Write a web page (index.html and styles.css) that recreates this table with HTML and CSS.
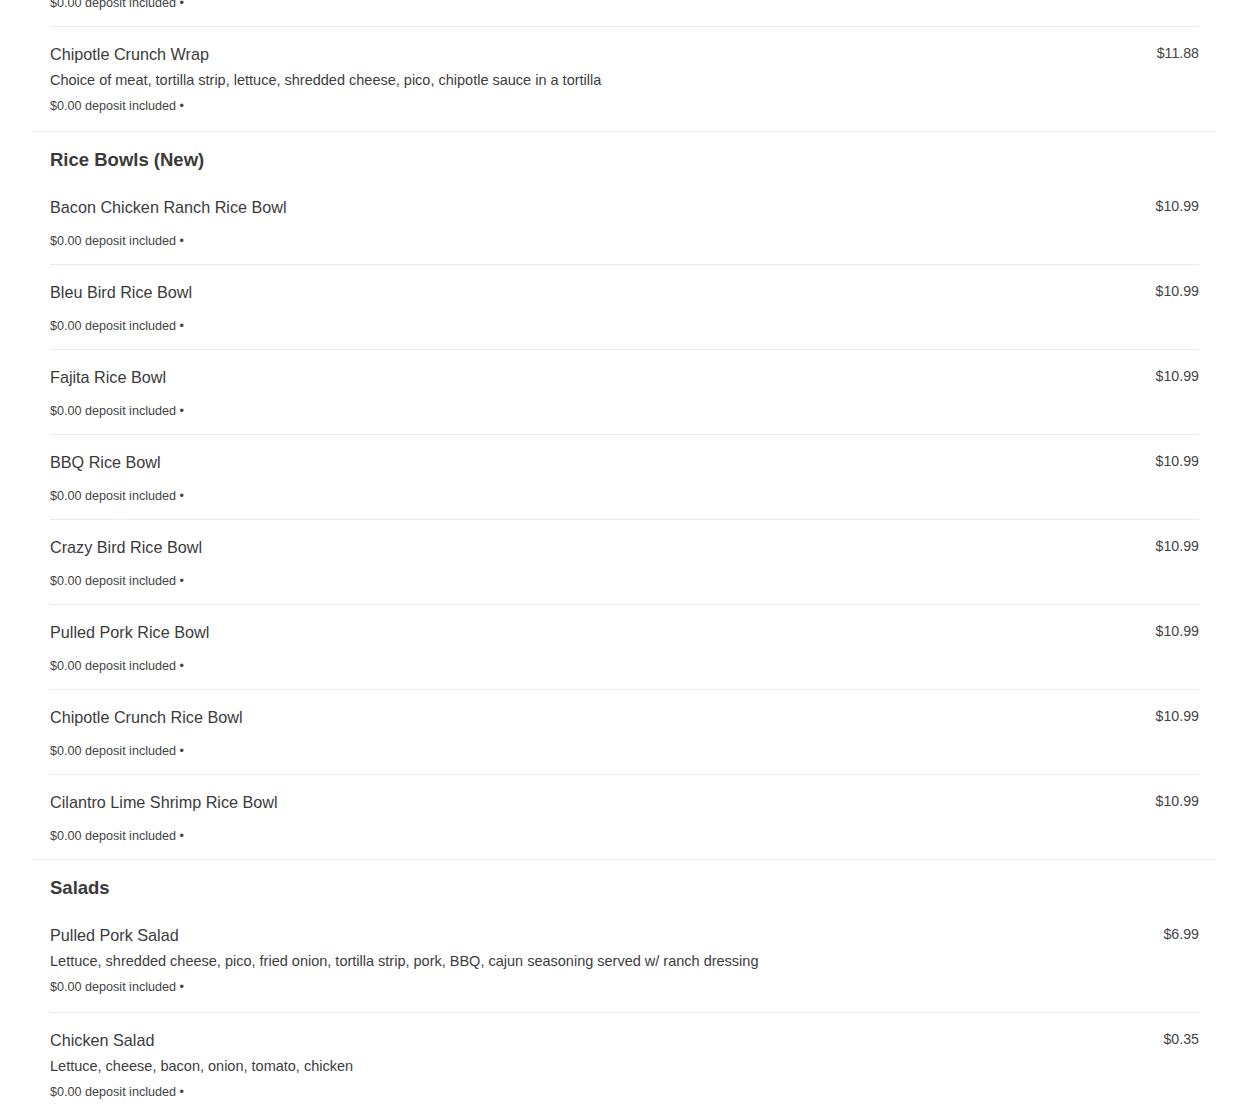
FILE: index.html
```html
<!DOCTYPE html>
<html lang="en">
<head>
<meta charset="utf-8">
<title>Menu</title>
<link rel="stylesheet" href="styles.css">
</head>
<body>
<main class="menu">
  <section class="section section--scrolled">
    <div class="item item--partial">
      <div class="deposit">$0.00 deposit included •</div>
    </div>
    <div class="item">
      <div class="item-head"><div class="item-title">Chipotle Crunch Wrap</div><div class="price">$11.88</div></div>
      <div class="desc">Choice of meat, tortilla strip, lettuce, shredded cheese, pico, chipotle sauce in a tortilla</div>
      <div class="deposit">$0.00 deposit included •</div>
    </div>
  </section>

  <section class="section">
    <h2 class="section-title">Rice Bowls (New)</h2>
    <div class="item">
      <div class="item-head"><div class="item-title">Bacon Chicken Ranch Rice Bowl</div><div class="price">$10.99</div></div>
      <div class="deposit deposit--nodesc">$0.00 deposit included •</div>
    </div>
    <div class="item">
      <div class="item-head"><div class="item-title">Bleu Bird Rice Bowl</div><div class="price">$10.99</div></div>
      <div class="deposit deposit--nodesc">$0.00 deposit included •</div>
    </div>
    <div class="item">
      <div class="item-head"><div class="item-title">Fajita Rice Bowl</div><div class="price">$10.99</div></div>
      <div class="deposit deposit--nodesc">$0.00 deposit included •</div>
    </div>
    <div class="item">
      <div class="item-head"><div class="item-title">BBQ Rice Bowl</div><div class="price">$10.99</div></div>
      <div class="deposit deposit--nodesc">$0.00 deposit included •</div>
    </div>
    <div class="item">
      <div class="item-head"><div class="item-title">Crazy Bird Rice Bowl</div><div class="price">$10.99</div></div>
      <div class="deposit deposit--nodesc">$0.00 deposit included •</div>
    </div>
    <div class="item">
      <div class="item-head"><div class="item-title">Pulled Pork Rice Bowl</div><div class="price">$10.99</div></div>
      <div class="deposit deposit--nodesc">$0.00 deposit included •</div>
    </div>
    <div class="item">
      <div class="item-head"><div class="item-title">Chipotle Crunch Rice Bowl</div><div class="price">$10.99</div></div>
      <div class="deposit deposit--nodesc">$0.00 deposit included •</div>
    </div>
    <div class="item">
      <div class="item-head"><div class="item-title">Cilantro Lime Shrimp Rice Bowl</div><div class="price">$10.99</div></div>
      <div class="deposit deposit--nodesc">$0.00 deposit included •</div>
    </div>
  </section>

  <section class="section">
    <h2 class="section-title">Salads</h2>
    <div class="item">
      <div class="item-head"><div class="item-title">Pulled Pork Salad</div><div class="price">$6.99</div></div>
      <div class="desc">Lettuce, shredded cheese, pico, fried onion, tortilla strip, pork, BBQ, cajun seasoning served w/ ranch dressing</div>
      <div class="deposit">$0.00 deposit included •</div>
    </div>
    <div class="item">
      <div class="item-head"><div class="item-title">Chicken Salad</div><div class="price">$0.35</div></div>
      <div class="desc">Lettuce, cheese, bacon, onion, tomato, chicken</div>
      <div class="deposit">$0.00 deposit included •</div>
    </div>
  </section>
</main>
</body>
</html>
```

FILE: styles.css
```css
html, body {
  margin: 0;
  padding: 0;
  background: #ffffff;
}

body {
  font-family: "Liberation Sans", Arial, sans-serif;
  color: #333333;
  overflow: hidden;
}

.menu {
  margin: 0 34px 0 33px;
}

.section {
  padding: 0 17px;
  border-bottom: 1px solid #ebebeb;
}

.section--scrolled {
  margin-top: -5px;
}

.section-title {
  margin: 0;
  padding-top: 17px;
  padding-bottom: 9px;
  font-size: 18.5px;
  line-height: 22px;
  font-weight: bold;
  color: #3a3a3a;
}

.item {
  padding: 17px 0 16px;
  border-bottom: 1px solid #ebebeb;
}

.item:last-child {
  border-bottom: none;
}

.item--partial {
  padding-top: 0;
  padding-bottom: 14px;
}

.item-head {
  display: flex;
  justify-content: space-between;
  align-items: flex-start;
}

.item-title {
  font-size: 16.2px;
  line-height: 20px;
  color: #3b3b3b;
}

.price {
  font-size: 14.2px;
  line-height: 16px;
  color: #444444;
  margin-top: 1px;
}

.desc {
  margin-top: 7px;
  font-size: 14.5px;
  line-height: 18px;
  color: #3d3d3d;
}

.deposit {
  margin-top: 9px;
  font-size: 12.6px;
  line-height: 17px;
  color: #444444;
}

.item--partial .deposit {
  margin-top: 0;
}

.deposit--nodesc {
  margin-top: 16px;
  margin-bottom: -2px;
}
```
